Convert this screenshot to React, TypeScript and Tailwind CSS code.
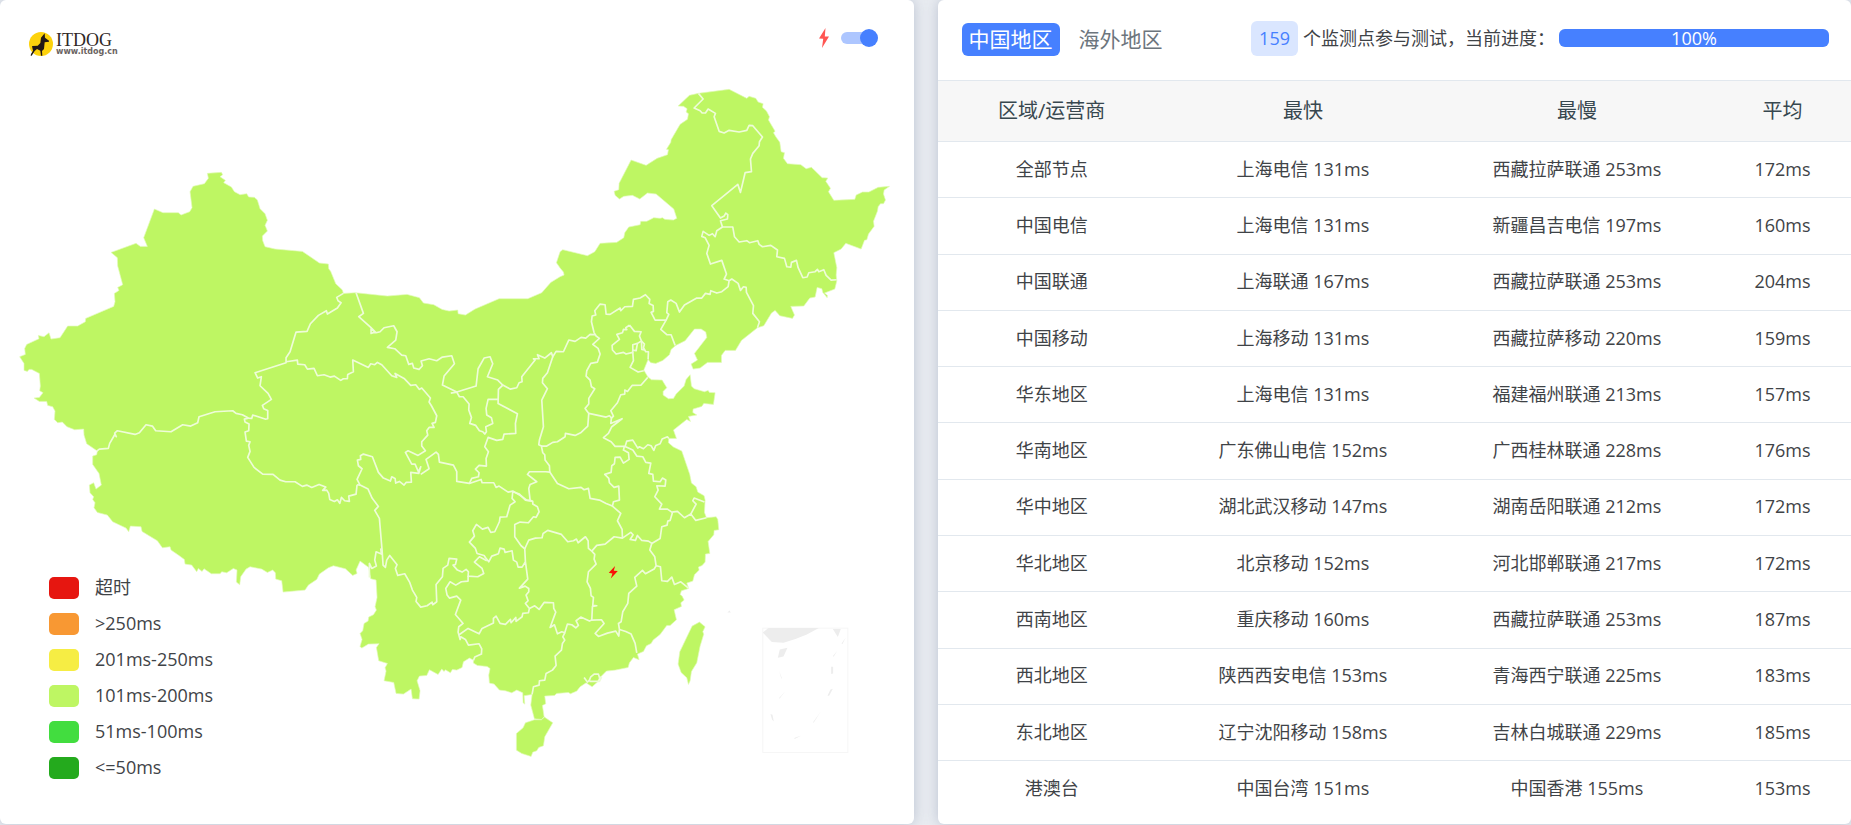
import { useState } from "react";

interface RegionRow {
  region: string;
  fastest: string;
  slowest: string;
  average: string;
}

const rows: RegionRow[] = [
  { region: "全部节点", fastest: "上海电信 131ms", slowest: "西藏拉萨联通 253ms", average: "172ms" },
  { region: "中国电信", fastest: "上海电信 131ms", slowest: "新疆昌吉电信 197ms", average: "160ms" },
  { region: "中国联通", fastest: "上海联通 167ms", slowest: "西藏拉萨联通 253ms", average: "204ms" },
  { region: "中国移动", fastest: "上海移动 131ms", slowest: "西藏拉萨移动 220ms", average: "159ms" },
  { region: "华东地区", fastest: "上海电信 131ms", slowest: "福建福州联通 213ms", average: "157ms" },
  { region: "华南地区", fastest: "广东佛山电信 152ms", slowest: "广西桂林联通 228ms", average: "176ms" },
  { region: "华中地区", fastest: "湖北武汉移动 147ms", slowest: "湖南岳阳联通 212ms", average: "172ms" },
  { region: "华北地区", fastest: "北京移动 152ms", slowest: "河北邯郸联通 217ms", average: "172ms" },
  { region: "西南地区", fastest: "重庆移动 160ms", slowest: "西藏拉萨联通 253ms", average: "187ms" },
  { region: "西北地区", fastest: "陕西西安电信 153ms", slowest: "青海西宁联通 225ms", average: "183ms" },
  { region: "东北地区", fastest: "辽宁沈阳移动 158ms", slowest: "吉林白城联通 229ms", average: "185ms" },
  { region: "港澳台", fastest: "中国台湾 151ms", slowest: "中国香港 155ms", average: "153ms" },
];

const legend = [
  { label: "超时", color: "bg-[#e61610]" },
  { label: ">250ms", color: "bg-[#f89833]" },
  { label: "201ms-250ms", color: "bg-[#f6ed44]" },
  { label: "101ms-200ms", color: "bg-[#bef663]" },
  { label: "51ms-100ms", color: "bg-[#42dd3f]" },
  { label: "<=50ms", color: "bg-[#24aa1d]" },
];

const tabs = ["中国地区", "海外地区"];

const mainland =
  "622,520 664,517 668,524 660,530 676,541 671,548 694,561 703,575 720,584 740,581 746,591 763,592 772,600 780,626 795,641 802,661 795,676 802,693 787,708 788,722 795,740 825,747 907,754 958,789 985,792 986,806 992,814 1007,851 1027,870 1030,880 1066,878 " +
  "1162,888 1221,883 1258,893 1270,909 1301,914 1326,928 1347,933 1373,930 1374,941 1396,945 1425,927 1497,896 1583,896 1625,878 1652,847 1680,830 1692,825 1690,816 1680,804 1669,788 1680,755 1688,749 " +
  "1762,767 1784,755 1800,730 1850,727 1871,713 1874,698 1886,681 1920,674 1922,664 1940,664 1961,653 1980,655 1987,653 1994,658 2020,660 2030,655 2021,627 1968,582 1942,579 1919,597 1897,586 1871,589 1858,597 1845,586 1842,574 1856,569 1857,550 1893,480 1938,496 1971,475 2002,464 2005,449 1999,448 2012,427 2013,419 2040,373 2062,358 2065,341 2058,336 2061,326 2050,319 2034,318 2068,286 2095,280 2187,268 " +
  "2240,295 2247,289 2267,295 2274,306 2289,311 2287,322 2299,333 2308,350 2305,360 2325,394 2320,398 2327,410 2339,427 2343,455 2353,458 2350,475 2362,491 2402,494 2418,506 2434,502 2466,533 2483,534 2477,544 2491,565 2485,575 2501,601 2564,598 2568,585 2587,576 2606,576 2634,562 2668,559 2652,570 2650,582 2656,600 2650,611 2641,611 2634,620 2632,633 2620,664 2622,679 2605,702 2600,719 2593,721 2583,747 2537,730 2523,747 2501,758 2510,803 2508,825 2510,842 2504,867 2473,879 2482,886 2481,893 2468,877 2465,866 2451,862 2445,891 2429,894 2411,918 2372,919 2383,945 2377,955 2339,947 2325,931 2314,939 2291,977 2272,983 " +
  "2224,1021 2206,1051 2175,1051 2164,1066 2164,1087 2122,1087 2100,1104 2079,1107 2073,1092 2092,1080 2083,1060 2120,1012 2117,996 2103,987 2083,987 2055,1022 2027,1036 2013,1048 2008,1064 1988,1081 1967,1090 1952,1088 1944,1078 1931,1110 1943,1130 1954,1139 1986,1140 2000,1163 1989,1174 1989,1185 2005,1196 2020,1195 2028,1182 2052,1158 2058,1138 2070,1124 2074,1158 2082,1166 2113,1175 2124,1171 2128,1177 2145,1178 2140,1213 2111,1210 2105,1219 2079,1227 2078,1237 2090,1245 2065,1249 2071,1264 2060,1258 2020,1290 2029,1315 2006,1315 2005,1328 2020,1341 2045,1353 2069,1423 2074,1449 2088,1460 2093,1476 2112,1487 2115,1500 2113,1537 2119,1553 2148,1550 2153,1558 2156,1589 2142,1591 2141,1604 2124,1624 " +
  "2129,1660 2116,1662 2115,1686 2106,1696 2095,1701 2097,1710 2083,1724 2078,1743 2060,1749 2066,1765 2044,1772 2040,1783 2046,1788 2052,1800 2042,1808 2044,1819 2022,1829 2029,1859 2010,1876 2000,1876 1980,1903 1959,1920 1953,1930 1939,1937 1930,1954 1912,1962 1917,1979 1900,1972 1888,1988 1884,2002 1846,2010 1819,2013 1796,2036 1792,2046 1776,2060 1758,2048 1740,2060 1730,2073 1711,2081 1705,2077 1670,2080 1663,2086 1634,2088 1637,2111 1627,2116 1632,2150 1624,2158 1603,2156 1592,2115 1596,2083 1572,2087 1574,2112 1569,2108 1568,2078 1550,2070 1535,2078 1516,2072 1498,2070 1482,2052 1468,2049 1466,2025 1470,2005 1461,1999 1432,1996 1420,1989 1420,1980 1408,1974 1390,1985 1386,2002 1370,2010 1357,2008 1351,2018 1336,2009 1332,2014 1325,2007 1314,2023 1288,2009 1280,2026 1258,2028 1251,2042 1260,2072 1257,2097 1237,2096 1233,2067 1210,2082 1188,2080 1181,2047 1152,2042 1158,2013 1155,2003 1162,1990 1136,1982 1129,1942 1137,1931 1105,1932 1085,1944 1080,1939 1086,1918 1080,1900 1088,1892 1092,1870 1104,1863 1106,1851 1120,1844 1129,1830 1125,1820 1131,1792 1128,1740 1112,1736 1106,1702 1080,1683 1068,1710 1071,1720 1058,1726 1036,1706 1000,1697 985,1703 " +
  "958,1722 950,1738 925,1755 915,1770 849,1776 845,1742 827,1737 826,1718 818,1710 802,1717 785,1707 750,1700 738,1707 722,1730 719,1754 709,1746 711,1710 700,1705 680,1718 665,1715 660,1721 634,1721 612,1706 606,1714 595,1705 590,1715 575,1695 555,1692 553,1678 535,1665 513,1650 510,1640 487,1643 472,1622 426,1594 423,1580 391,1578 386,1595 378,1584 338,1565 322,1545 292,1537 282,1523 285,1508 278,1498 281,1490 270,1478 268,1455 281,1448 288,1467 304,1455 297,1420 278,1393 278,1368 290,1364 292,1353 260,1331 252,1305 251,1287 224,1289 201,1280 187,1266 173,1268 163,1258 165,1233 158,1220 143,1216 140,1204 118,1204 102,1194 118,1192 129,1178 119,1172 121,1158 118,1120 95,1108 87,1108 82,1114 72,1111 72,1090 59,1070 76,1063 74,1045 80,1033 117,1016 115,1006 132,1010 147,998 153,1017 180,1013 203,978 233,978 256,965 257,955 341,919 345,905 343,880 357,871 353,862 368,854 353,798 352,773 333,757 408,730 421,739 442,739 431,713 463,627 489,638 535,638 543,645 569,635 576,623 570,575 579,559 613,551 625,535";

const hainan =
  "1576,2168 1603,2159 1624,2159 1633,2151 1658,2168 1634,2210 1630,2237 1616,2242 1610,2252 1598,2256 1593,2269 1565,2260 1549,2250 1549,2200 1569,2183";

const taiwan =
  "2076,1878 2098,1866 2115,1880 2108,1895 2111,1902 2100,1938 2090,1988 2074,2014 2070,2042 2065,2053 2060,2033 2043,2017 2034,1992 2039,1955";

// province borders, drawn over the mainland shape
const borders = [
  "1030,880 1010,892 1014,902 1023,908 1012,924 982,942 979,932 955,946 931,971 921,994 888,996 870,1055 858,1073 858,1088 765,1118 773,1134 784,1130 780,1157 804,1180 814,1198 787,1216 791,1226 803,1231 803,1256 795,1257 758,1245 755,1255 745,1254 727,1244 708,1240 698,1232 645,1235 597,1250 593,1268 572,1278 548,1274 513,1295 467,1292 457,1278 438,1274 418,1298 405,1303 352,1292 344,1299 349,1310 344,1304 329,1330 325,1345 298,1347 290,1353",
  "745,1254 733,1257 735,1266 747,1272 746,1292 735,1296 739,1323 750,1325 746,1336 750,1354 743,1372 762,1402 788,1422 819,1423 840,1440 857,1445 885,1445 907,1459 920,1455 935,1462 957,1453 977,1461 968,1471 980,1470 986,1480 989,1498 1003,1504 1012,1499 1019,1510 1024,1492 1034,1502 1048,1504 1046,1488 1068,1482 1071,1454",
  "858,1085 892,1080 893,1092 914,1094 922,1107 942,1105 952,1127 972,1124 990,1131 1003,1128 1022,1141 1030,1136 1042,1136 1043,1123 1060,1115 1058,1080 1105,1102 1112,1091 1124,1094 1132,1087 1145,1094 1175,1127 1190,1132 1185,1120 1212,1135 1232,1156 1247,1154 1258,1168 1265,1164 1291,1194 1287,1206 1294,1217 1310,1247 1306,1267 1296,1270 1302,1282 1287,1282 1280,1292 1283,1305 1265,1325 1265,1338 1276,1352 1254,1366 1224,1352 1216,1357 1235,1392 1245,1392 1255,1415 1262,1400 1256,1420 1232,1417 1234,1446 1218,1447 1212,1455 1198,1444 1187,1449 1185,1435 1175,1430 1171,1443 1150,1434 1135,1417 1117,1370 1090,1362 1081,1367 1082,1378 1072,1380 1075,1397 1086,1406 1071,1438 1080,1455 1104,1467 1116,1494 1135,1519 1124,1531 1138,1555 1146,1650 1149,1695 1156,1702 1160,1680 1169,1666 1191,1694 1186,1705 1193,1726 1214,1721 1229,1747 1237,1770 1250,1792 1248,1804 1262,1821 1281,1817 1296,1806 1298,1814 1310,1805 1308,1753 1327,1730 1329,1705 1343,1695 1347,1675 1370,1677 1366,1693 1359,1695 1372,1710 1386,1716 1398,1708 1405,1715 1404,1728 1433,1730 1451,1720 1446,1705 1423,1686 1438,1670 1460,1682",
  "1071,1454 1080,1455",
  "1142,1645 1144,1662 1128,1655 1124,1680 1129,1698 1115,1705 1108,1690 1108,1732",
  "1404,1728 1404,1743 1384,1745 1367,1755 1350,1745 1337,1765 1341,1785 1348,1794 1370,1788 1382,1800 1366,1843 1389,1870 1376,1880 1374,1896 1380,1918 1382,1910 1396,1918 1405,1935 1437,1931 1445,1946 1444,1962 1424,1971 1420,1981",
  "1377,1904 1404,1885 1437,1901 1446,1885 1480,1869 1480,1855 1488,1848 1500,1870 1516,1873 1531,1858 1533,1868 1547,1852 1548,1864 1566,1850 1568,1840 1585,1838 1588,1825 1576,1810 1584,1802 1578,1785 1586,1775 1586,1765 1575,1758 1558,1764 1583,1737 1576,1685 1566,1701 1554,1701 1550,1686 1540,1680 1536,1652 1515,1657 1512,1647 1500,1644 1495,1661 1475,1668 1466,1685 1456,1672 1452,1666 1431,1660 1426,1645 1408,1626 1423,1608 1418,1592 1429,1573 1447,1587 1464,1582 1472,1597 1484,1595 1498,1565 1500,1551 1520,1550 1530,1515 1545,1505 1536,1495 1538,1475 1558,1482 1576,1500 1598,1504 1598,1512 1612,1520 1617,1535 1608,1552 1600,1550 1585,1568 1560,1566 1544,1573 1544,1610 1563,1637 1574,1646 1576,1685",
  "1574,1646 1586,1620 1606,1614 1626,1613 1629,1600 1643,1591 1684,1603 1703,1625 1720,1622 1729,1617 1734,1628 1756,1610 1764,1622 1765,1645 1775,1653 1784,1663 1782,1677 1788,1692 1765,1715 1761,1745 1771,1765 1773,1787 1780,1792 1778,1816 1790,1817 1777,1819 1775,1860",
  "1775,1653 1790,1636 1815,1632 1842,1610 1867,1614 1892,1597 1899,1604 1890,1618 1906,1621 1912,1606 1925,1621 1945,1623 1955,1630 1980,1615 1985,1580 2001,1575 2003,1563 2010,1561 2017,1537",
  "1588,1825 1604,1817 1617,1828 1632,1807 1660,1808 1661,1825 1667,1836 1650,1882 1663,1874 1672,1901 1685,1895 1694,1898 1702,1872 1715,1874 1727,1883 1735,1876 1728,1862 1742,1851 1768,1863 1775,1860 1804,1859 1812,1870 1785,1900 1795,1909 1822,1899 1847,1893 1856,1908 1858,1888 1855,1870 1863,1865 1868,1835 1883,1810 1886,1780 1910,1758 1904,1732 1927,1711 1936,1721 1962,1707 1968,1697 1964,1670 1949,1650 1955,1630",
  "1694,1898 1688,1910 1694,1920 1687,1930 1684,1950 1665,1968 1668,1996 1657,2010 1638,2020 1634,2040 1618,2042 1617,2055 1600,2060 1596,2083",
  "1858,1888 1877,1894 1893,1902 1905,1930 1910,1958",
  "1968,1697 1981,1700 1985,1742 2002,1744 2015,1731 2023,1753 2042,1745 2066,1765",
  "1867,1614 1866,1588 1852,1562 1862,1540 1837,1518 1840,1505 1858,1500 1856,1458 1842,1462 1828,1448 1826,1435 1814,1423 1833,1417 1835,1397 1843,1391 1845,1372 1860,1371 1870,1389 1887,1378 1885,1358 1870,1350 1873,1338",
  "1837,1518 1818,1510 1798,1500 1770,1495 1765,1465 1752,1469 1743,1462 1706,1466 1672,1450 1649,1416 1637,1415 1588,1415 1582,1423 1610,1445 1590,1453 1586,1465 1590,1500",
  "1649,1416 1648,1397 1635,1380 1634,1364 1628,1358 1624,1338 1616,1334 1618,1320 1630,1280 1625,1200 1642,1166 1627,1148 1628,1135 1642,1118 1658,1070",
  "1624,1338 1640,1338 1658,1327 1672,1325 1695,1310 1696,1300 1725,1306 1743,1297 1763,1278 1766,1240 1755,1225 1766,1212 1766,1195 1784,1166 1774,1160 1770,1140 1758,1128 1760,1112 1772,1090 1792,1086 1800,1062 1794,1045 1778,1033 1798,1015 1788,1008 1782,998",
  "1788,1004 1770,1003 1757,1014 1743,1012 1725,1024 1706,1020 1690,1055 1668,1054 1658,1070 1654,1058 1634,1074 1612,1064 1617,1076 1600,1076 1605,1080 1565,1130 1566,1145 1557,1148 1550,1163 1530,1167 1508,1155 1493,1140 1462,1130 1478,1091 1470,1070 1452,1074 1434,1106 1428,1158 1370,1176 1327,1155 1332,1128 1363,1091 1355,1067 1327,1071 1310,1082 1287,1076 1263,1083 1267,1097 1257,1108 1241,1104 1237,1090 1226,1093 1217,1067 1205,1065 1184,1046 1162,1042 1187,1020 1191,995 1181,977 1152,983 1140,995 1128,998 1113,987 1113,1000 1126,996 1112,982 1076,950 1090,940 1068,878",
  "1352,1179 1370,1176 1378,1190 1389,1190 1407,1212 1406,1230 1414,1252 1409,1270 1427,1276 1438,1292 1448,1295 1454,1302 1459,1295 1457,1280 1478,1270 1474,1253 1460,1245 1458,1225 1464,1198 1495,1198",
  "1508,1155 1495,1168 1494,1210 1552,1241 1546,1270 1547,1300 1512,1302 1508,1318 1490,1321 1464,1312 1454,1340 1465,1355 1458,1375 1459,1398 1437,1396 1426,1407 1437,1418 1435,1430 1415,1435 1408,1450",
  "1262,1423 1287,1406 1278,1378 1308,1356 1315,1363 1318,1386 1360,1395 1370,1415 1370,1444 1408,1450 1443,1438 1446,1448 1481,1448 1488,1462 1497,1458 1524,1476 1538,1473 1562,1487 1580,1500 1597,1502",
  "1766,1240 1818,1251 1828,1247 1834,1254 1840,1248 1832,1232 1852,1208 1862,1184 1874,1182 1874,1170 1882,1174 1896,1156 1923,1155 1943,1132",
  "1834,1254 1832,1270 1866,1256 1835,1280 1825,1300 1810,1313 1833,1325 1845,1339 1875,1339 1880,1323 1898,1320 1913,1344 1918,1340 1930,1346 1943,1334 1953,1337 1961,1351 1967,1336 1980,1331 1986,1317 2002,1310 2006,1315",
  "1875,1339 1898,1350 1910,1368 1928,1370 1937,1387 1952,1389 1946,1420 1958,1423 1960,1443 1980,1445 1987,1434 1997,1440 1995,1458 1970,1457 1974,1470 1964,1490 1985,1512 1978,1527 2002,1527 2015,1536 2032,1534 2053,1553 2072,1542 2087,1561 2119,1553",
  "2072,1542 2088,1512 2078,1502 2082,1494 2113,1506",
  "1888,975 1903,994 1923,995 1918,1008 1924,1023 1912,1030 1898,1034 1898,1057 1878,1062 1870,1057 1848,1062 1837,1050 1836,1036 1858,1018 1850,1003 1867,998 1870,988 1880,989 1877,983 1888,975",
  "1898,1050 1908,1052 1912,1030",
  "1924,1023 1933,1032 1930,1043 1937,1055 1945,1055 1944,1078",
  "1924,1023 1925,1048 1933,1050",
  "1898,1057 1900,1082 1890,1102 1914,1116 1931,1112",
  "1782,998 1774,965 1776,948 1787,945 1784,932 1800,912 1815,914 1818,942 1830,943 1860,924 1862,932 1874,920 1897,919 1900,898 1920,894 1936,884 1949,898 1947,910 1959,916 1960,934 1953,937 1965,960 1998,960 2006,943 2000,938 2003,905 2012,900 2028,910 2038,936 2053,915 2090,894 2105,894 2116,880 2130,883 2132,872 2150,879 2165,875 2184,860 2187,842 2195,837 2214,850 2221,871 2230,860 2238,862 2239,877 2260,917 2258,940 2278,965 2272,983",
  "1998,960 1982,988 2000,1004 2013,1004 2025,1036",
  "2187,842 2172,837 2179,822 2165,781 2131,792 2120,760 2127,736 2115,713 2105,709 2109,694 2127,706 2137,701 2145,710 2150,692 2167,681 2198,681 2203,710 2217,726 2240,722 2248,728 2273,722 2277,733 2287,740 2312,736 2332,750 2330,770 2353,775 2360,800 2372,801 2374,787 2389,781 2394,803 2408,833 2421,831 2426,818 2445,815 2452,808 2456,815 2471,809 2478,826 2493,840 2510,839",
  "2167,681 2161,662 2182,657 2183,644 2177,639 2172,648 2161,654 2135,617 2213,553 2221,577 2235,518 2254,515 2251,477 2258,460 2277,437 2278,425 2287,411 2258,377 2247,376 2240,391 2217,396 2187,391 2172,399 2157,394 2142,350 2146,340 2124,327 2116,339 2106,339 2100,332 2082,324 2109,297 2095,280",
  "1752,2032 1762,2046 1768,2040 1772,2030 1782,2022 1795,2022 1798,2032 1804,2032 1798,2044 1768,2044",
];

const seaShapes = [
  "2288,1897 2305,1884 2456,1884 2420,1903 2388,1916 2350,1928 2315,1926",
  "2498,1887 2522,1887 2513,1911",
  "2339,1948 2362,1943 2350,1969 2333,1973",
  "2493,2000 2499,2000 2499,2020 2493,2022",
  "2491,2068 2498,2066 2487,2087 2482,2087",
  "2311,2142 2317,2144 2321,2164 2316,2159",
  "2462,2134 2441,2167 2438,2167",
  "2537,1912 2527,1932 2524,1930",
  "2511,1953 2500,1971 2499,1967",
  "2337,2012 2346,2037 2343,2034",
  "2356,2073 2338,2096 2337,2094",
  "2404,2206 2382,2217 2384,2213",
  "2182,1837 2188,1831 2192,1837",
];

function ChinaMap() {
  return (
    <svg viewBox="0 0 2740 2472" className="block w-full" aria-hidden="true">
      <g fill="#bef663" stroke="#e2fbba" strokeWidth="2" strokeLinejoin="round">
        <polygon points={mainland} />
        <polygon points={hainan} />
        <polygon points={taiwan} />
      </g>
      <g fill="none" stroke="#eefcd8" strokeWidth="5" strokeLinejoin="round">
        {borders.map((points) => (
          <polyline key={points} points={points} />
        ))}
      </g>
      <rect x="2288" y="1884" width="255" height="373" fill="none" stroke="#f6f6f6" strokeWidth="3" />
      <g fill="#ededed">
        {seaShapes.map((points) => (
          <polygon key={points} points={points} />
        ))}
      </g>
      <polygon fill="#f90f06" points="1845,1698 1826,1718 1837,1720 1832,1735 1853,1713 1841,1712" />
    </svg>
  );
}

function Logo() {
  return (
    <div className="flex items-start gap-[3px]">
      <svg viewBox="0 0 72 72" className="size-6" aria-hidden="true">
        <circle cx="36" cy="36" r="36" fill="#fdd20c" />
        <path
          fill="#221815"
          d="M47 4 36 17 34 33 26 41 11 42 9 43 12 56 6 66 5 71 8 71 17 57 24 51 34 56 36 71 40 71 39 57 45 51 47 31 60 29 60 26 48 17z"
        />
      </svg>
      <div className="flex flex-col text-[#2f2725]">
        <span className="font-['Liberation_Serif',serif] text-[18px] leading-4">ITDOG</span>
        <span className="font-['DejaVu_Sans',sans-serif] text-[8px] leading-2 font-bold text-[#6a6361]">
          www.itdog.cn
        </span>
      </div>
    </div>
  );
}

export default function App() {
  const [activeTab, setActiveTab] = useState(tabs[0]);
  const [flash, setFlash] = useState(true);
  const progress = 100;

  return (
    <main className="grid min-h-screen grid-cols-2 content-start gap-6 bg-[#e9ecf1] font-['Open_Sans','Noto_Sans_CJK_SC',sans-serif] text-lg text-[#3f4347]">
      {/* Map */}
      <section className="relative rounded-md bg-white shadow-[0_0_14px_rgba(130,145,170,0.45)]">
        <ChinaMap />
        <div className="absolute top-8 left-[29px]">
          <Logo />
        </div>
        <label className="absolute top-7 right-[39px] flex items-center gap-3">
          <svg viewBox="0 0 10 20" className="h-5 w-[10px]" aria-label="闪烁">
            <polygon fill="#ff5653" points="6.5,0 0,10.5 4.2,10.8 3,20 10,8.5 5.8,8.4" />
          </svg>
          <input
            type="checkbox"
            checked={flash}
            onChange={(e) => setFlash(e.target.checked)}
            className="relative h-3 w-[34px] appearance-none rounded-full bg-gray-300 before:absolute before:-top-[3px] before:-left-[3px] before:size-[18px] before:rounded-full before:bg-gray-500 checked:bg-[#adc6ff] checked:before:left-[19px] checked:before:bg-[#4680ff]"
          />
        </label>
        <ul className="absolute bottom-[38px] left-[49px]">
          {legend.map((item) => (
            <li key={item.label} className="flex h-9 items-center gap-4 leading-6">
              <span className={`h-[22px] w-[30px] rounded-[5px] ${item.color}`} />
              <span className="pb-[3px]">{item.label}</span>
            </li>
          ))}
        </ul>
      </section>

      {/* Results */}
      <section className="flex flex-col rounded-md bg-white pb-2 shadow-[0_0_14px_rgba(130,145,170,0.45)]">
        <div className="flex h-20 items-center justify-between pr-[22px] pb-0.5 pl-6">
          <div className="flex gap-3 text-[21px] leading-[33px]">
            {tabs.map((tab) => (
              <button
                key={tab}
                onClick={() => setActiveTab(tab)}
                className={
                  tab === activeTab
                    ? "rounded-md bg-[#4680ff] px-[7px] text-white"
                    : "rounded-md px-[7px] text-[#6c757d]"
                }
              >
                {tab}
              </button>
            ))}
          </div>
          <div className="flex items-center pb-0.5">
            <span className="mr-[5px] rounded-md bg-[#dae6ff] px-2 leading-[35px] text-[#4680ff]">159</span>
            <span className="mr-1 leading-6">个监测点参与测试，当前进度：</span>
            <div
              role="progressbar"
              aria-label="当前进度"
              aria-valuenow={progress}
              className="h-[18px] w-[270px] rounded-md bg-gray-200"
            >
              <div
                className="h-full rounded-md bg-[#4680ff] text-center leading-[18px] text-white"
                style={{ width: `${progress}%` }}
              >
                {progress}%
              </div>
            </div>
          </div>
        </div>

        <table className="w-full flex-1 table-fixed border-collapse text-center leading-6">
          <thead>
            <tr className="h-[61px] border-y border-[#e2e8ee] bg-[#f7f7f7] text-xl text-[#37474f]">
              <th className="w-[25%] font-normal">区域/运营商</th>
              <th className="w-[30%] font-normal">最快</th>
              <th className="w-[30%] font-normal">最慢</th>
              <th className="w-[15%] font-normal">平均</th>
            </tr>
          </thead>
          <tbody>
            {rows.map((row) => (
              <tr key={row.region} className="border-b border-[#e2e8ee] last:border-b-0">
                <td className="pb-0.5">{row.region}</td>
                <td className="pb-0.5">{row.fastest}</td>
                <td className="pb-0.5">{row.slowest}</td>
                <td className="pb-0.5">{row.average}</td>
              </tr>
            ))}
          </tbody>
        </table>
      </section>
    </main>
  );
}
